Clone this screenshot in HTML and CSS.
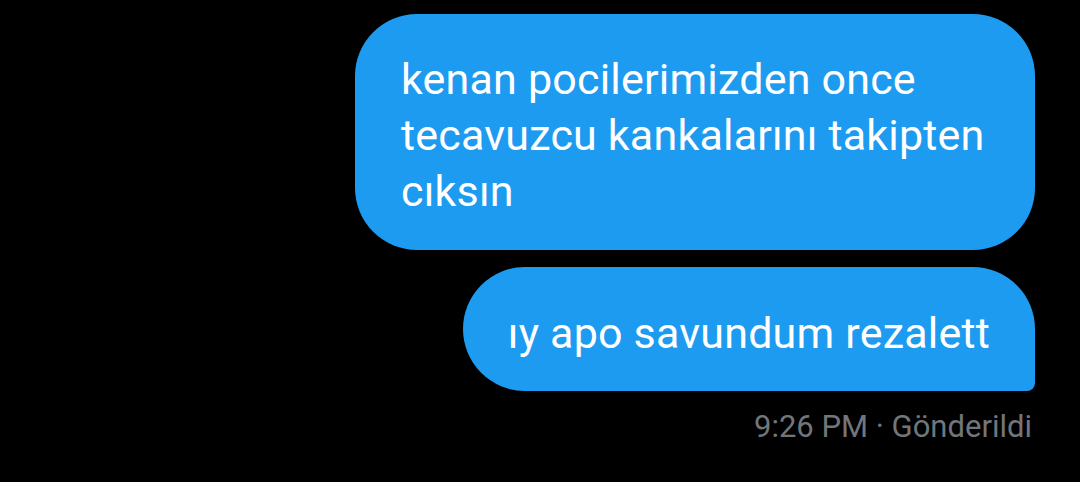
FILE: index.html
```html
<!DOCTYPE html>
<html lang="tr">
<head>
    <meta charset="UTF-8">
    <meta name="viewport" content="width=device-width, initial-scale=1.0">
    <title>Mesajlar</title>
    <link rel="stylesheet" href="styles.css">
</head>
<body>
    <div class="conversation">
        <div class="bubble">kenan pocilerimizden once tecavuzcu kankalarını takipten cıksın</div>
        <div class="bubble bubble-last">ıy apo savundum rezalett</div>
        <div class="meta">9:26 PM · Gönderildi</div>
    </div>
</body>
</html>
```

FILE: styles.css
```css
* {
    box-sizing: border-box;
    margin: 0;
    padding: 0;
}

body {
    font-family: Roboto, "Noto Sans", sans-serif;
    background-color: #000;
    color: #fff;
    min-height: 100vh;
}

.conversation {
    display: flex;
    flex-direction: column;
    align-items: flex-end;
    gap: 17px;
    padding: 14px 45px 0 0;
}

.bubble {
    max-width: 680px;
    background-color: #1d9bf0;
    color: #fff;
    font-size: 43px;
    letter-spacing: 0.2px;
    line-height: 56px;
    padding: 37px 46px 31px 46px;
    border-radius: 62px;
}

.bubble-last {
    padding: 38px 45px 30px 45px;
    border-bottom-right-radius: 8px;
}

.meta {
    margin-top: 1px;
    padding-right: 3px;
    color: #71767b;
    font-size: 31px;
    line-height: 36px;
}
```
